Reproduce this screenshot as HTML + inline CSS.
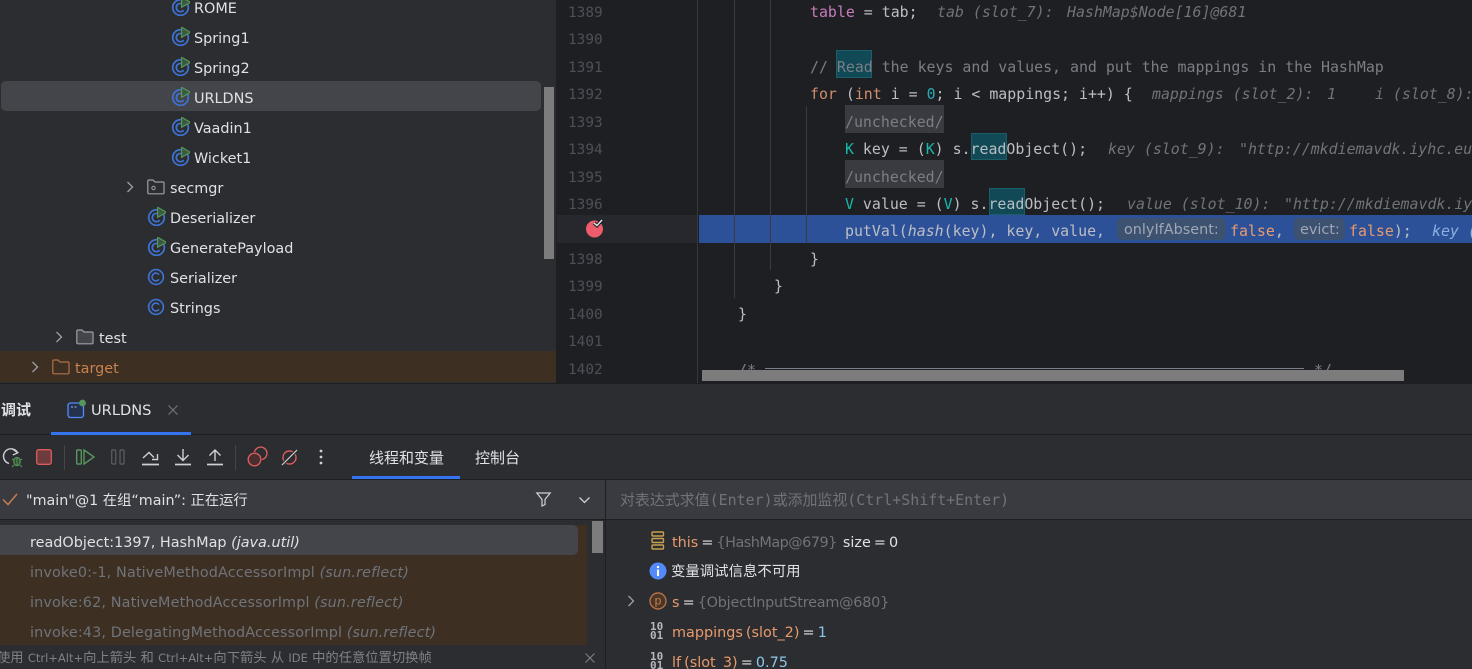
<!DOCTYPE html>
<html><head><meta charset="utf-8">
<style>
html,body{margin:0;padding:0;width:1472px;height:669px;overflow:hidden;background:#2b2d30}
*{box-sizing:border-box}
.a{position:absolute}
#r{position:relative;width:1472px;height:669px;overflow:hidden;font-family:"DejaVu Sans","Noto Sans CJK SC",sans-serif;color:#dfe1e5;font-size:14.4px}
.t{position:absolute;white-space:pre;line-height:20px;height:20px;margin-top:2px}
.c{position:absolute;white-space:pre;font-family:"DejaVu Sans Mono",monospace;font-size:14.9px;line-height:20px;height:20px;color:#bcbec4;margin-top:1px}
.n{position:absolute;left:568px;width:40px;font-family:"DejaVu Sans Mono",monospace;font-size:14.4px;line-height:20px;color:#4b5059;white-space:pre;margin-top:3px}
i{font-style:italic;color:#6f737a}
.hl{background:#114957;box-shadow:inset 0 0 0 1px #1b5d69}
.o{color:#e89a6c}.g{color:#6f737a}.b{color:#8fc7ea}
.k{color:#16baac}.w{color:#cf8e6d}
.s{font:11.5px "DejaVu Sans",sans-serif}
.v{word-spacing:-1.5px}
.st{color:#6f737a;letter-spacing:.12px}
svg{position:absolute;overflow:visible}
</style></head><body><div id="r">
<svg width="0" height="0" style="position:absolute"><defs>
<symbol id="cl" viewBox="0 0 18 18"><circle cx="9" cy="9" r="7.4" fill="none" stroke="#3f73d6" stroke-width="1.6"/><path d="M12 6.6A3.9 3.9 0 1 0 12 11.4" fill="none" stroke="#3f73d6" stroke-width="1.6"/></symbol>
<symbol id="ru" viewBox="0 0 18 18"><circle cx="9" cy="10" r="7.4" fill="none" stroke="#3f73d6" stroke-width="1.6"/><path d="M12 7.6A3.9 3.9 0 1 0 12 12.4" fill="none" stroke="#3f73d6" stroke-width="1.6"/><path d="M10 .2L18.5 5L10 9.8Z" fill="#3a5a3e" stroke="#57965c" stroke-width="1.1"/></symbol>
<symbol id="ch" viewBox="0 0 8 12"><path d="M1.5 1L6.5 6L1.5 11" fill="none" stroke="#9da0a8" stroke-width="1.3"/></symbol>
</defs></svg>

<!-- project tree -->
<div class="a" style="left:0;top:0;width:556px;height:383px;background:#2b2d30"></div>
<div class="a" style="left:1px;top:81px;width:540px;height:30px;background:#43454a;border-radius:5px"></div>
<div class="a" style="left:0;top:351px;width:556px;height:31px;background:#3d3023"></div>
<div class="a" style="left:544px;top:87px;width:10px;height:172px;background:#7c7c7c"></div>

<svg style="left:171px;top:-3px" width="19" height="19"><use href="#ru"/></svg><div class="t" style="left:194px;top:-3px">ROME</div>
<svg style="left:171px;top:27px" width="19" height="19"><use href="#ru"/></svg><div class="t" style="left:194px;top:27px">Spring1</div>
<svg style="left:171px;top:57px" width="19" height="19"><use href="#ru"/></svg><div class="t" style="left:194px;top:57px">Spring2</div>
<svg style="left:171px;top:87px" width="19" height="19"><use href="#ru"/></svg><div class="t" style="left:194px;top:87px">URLDNS</div>
<svg style="left:171px;top:117px" width="19" height="19"><use href="#ru"/></svg><div class="t" style="left:194px;top:117px">Vaadin1</div>
<svg style="left:171px;top:147px" width="19" height="19"><use href="#ru"/></svg><div class="t" style="left:194px;top:147px">Wicket1</div>

<svg style="left:126px;top:181px" width="8" height="12"><use href="#ch"/></svg>
<svg style="left:147px;top:179px" width="18" height="16" viewBox="0 0 18 16"><path d="M.8 13.5V2.3Q.8 1 2 1H6L8 3H16Q17 3 17 4V13.5Q17 14.8 16 14.8H2Q.8 14.8 .8 13.5Z" fill="none" stroke="#9da0a8" stroke-width="1.2"/><circle cx="6.5" cy="9" r="1.7" fill="none" stroke="#9da0a8"/></svg>
<div class="t" style="left:170px;top:177px">secmgr</div>

<svg style="left:147px;top:207px" width="19" height="19"><use href="#ru"/></svg><div class="t" style="left:170px;top:207px">Deserializer</div>
<svg style="left:147px;top:237px" width="19" height="19"><use href="#ru"/></svg><div class="t" style="left:170px;top:237px">GeneratePayload</div>
<svg style="left:147px;top:268px" width="18" height="18"><use href="#cl"/></svg><div class="t" style="left:170px;top:267px">Serializer</div>
<svg style="left:147px;top:298px" width="18" height="18"><use href="#cl"/></svg><div class="t" style="left:170px;top:297px">Strings</div>

<svg style="left:55px;top:331px" width="8" height="12"><use href="#ch"/></svg>
<svg style="left:76px;top:329px" width="18" height="16" viewBox="0 0 18 16"><path d="M.8 13.5V2.3Q.8 1 2 1H6L8 3H16Q17 3 17 4V13.5Q17 14.8 16 14.8H2Q.8 14.8 .8 13.5Z" fill="#43454a" stroke="#9da0a8" stroke-width="1.2"/></svg>
<div class="t" style="left:99px;top:327px">test</div>

<svg style="left:31px;top:361px" width="8" height="12"><use href="#ch"/></svg>
<svg style="left:52px;top:359px" width="18" height="16" viewBox="0 0 18 16"><path d="M.8 13.5V2.3Q.8 1 2 1H6L8 3H16Q17 3 17 4V13.5Q17 14.8 16 14.8H2Q.8 14.8 .8 13.5Z" fill="none" stroke="#b3704a" stroke-width="1.2"/></svg>
<div class="t" style="left:75px;top:357px;color:#c8824f">target</div>

<!-- editor -->
<div class="a" style="left:556px;top:0;width:916px;height:383px;background:#1e1f22"></div>
<div class="a" style="left:557px;top:215px;width:140px;height:28px;background:#26282e"></div>
<div class="a" style="left:699px;top:215px;width:773px;height:28px;background:#2d5199"></div>
<div class="a" style="left:697px;top:0;width:1px;height:383px;background:#35373c"></div>
<div class="a" style="left:734px;top:0;width:1px;height:298px;background:#393b40"></div>
<div class="a" style="left:770px;top:0;width:1px;height:270px;background:#393b40"></div>
<div class="a" style="left:806px;top:106px;width:1px;height:137px;background:#393b40"></div>

<div class="n" style="top:0px">1389</div>
<div class="n" style="top:27px">1390</div>
<div class="n" style="top:55px">1391</div>
<div class="n" style="top:82px">1392</div>
<div class="n" style="top:110px">1393</div>
<div class="n" style="top:137px">1394</div>
<div class="n" style="top:165px">1395</div>
<div class="n" style="top:192px">1396</div>
<div class="n" style="top:247px">1398</div>
<div class="n" style="top:274px">1399</div>
<div class="n" style="top:302px">1400</div>
<div class="n" style="top:329px">1401</div>
<div class="n" style="top:357px">1402</div>

<svg style="left:585px;top:219px" width="20" height="19" viewBox="0 0 20 19"><circle cx="9.5" cy="10" r="8.5" fill="#ed5c6b"/><path d="M9 4L12 6.5L17 1" fill="none" stroke="#1e1f22" stroke-width="3.6"/><path d="M9 4L12 6.5L17 1" fill="none" stroke="#dfe1e5" stroke-width="1.5"/></svg>

<div class="c" style="left:810px;top:1px"><span style="color:#c77dbb">table</span> = tab;</div>
<div class="c" style="left:937px;top:1px"><i>tab (slot_7):</i></div>
<div class="c" style="left:1067px;top:1px"><i>HashMap$Node[16]@681</i></div>
<div class="a hl" style="left:836px;top:50px;width:36px;height:28px"></div>
<div class="c" style="left:810px;top:56px;color:#7a7e85">// Read the keys and values, and put the mappings in the HashMap</div>
<div class="c" style="left:810px;top:83px"><span class="w">for</span> (<span class="w">int</span> i = <span style="color:#2aacb8">0</span>; i &lt; mappings; i++) {</div>
<div class="c" style="left:1152px;top:83px"><i>mappings (slot_2):</i></div>
<div class="c" style="left:1327px;top:83px"><i>1</i></div>
<div class="c" style="left:1375px;top:83px"><i>i (slot_8):</i></div>
<div class="a" style="left:845px;top:105px;width:99px;height:28px;background:#393b40"></div>
<div class="c" style="left:845px;top:111px;color:#7a7e85">/unchecked/</div>
<div class="a hl" style="left:971px;top:133px;width:36px;height:27px"></div>
<div class="c" style="left:845px;top:138px"><span class="k">K</span> key = (<span class="k">K</span>) s.readObject();</div>
<div class="c" style="left:1108px;top:138px"><i>key (slot_9):</i></div>
<div class="c" style="left:1239px;top:138px"><i>"http://mkdiemavdk.iyhc.eu</i></div>
<div class="a" style="left:845px;top:160px;width:99px;height:28px;background:#393b40"></div>
<div class="c" style="left:845px;top:166px;color:#7a7e85">/unchecked/</div>
<div class="a hl" style="left:989px;top:188px;width:36px;height:27px"></div>
<div class="c" style="left:845px;top:193px"><span class="k">V</span> value = (<span class="k">V</span>) s.readObject();</div>
<div class="c" style="left:1127px;top:193px"><i>value (slot_10):</i></div>
<div class="c" style="left:1284px;top:193px"><i>"http://mkdiemavdk.iy</i></div>
<div class="c" style="left:845px;top:220px">putVal(<i style="color:#bcbec4">hash</i>(key), key, value,</div>
<div class="a" style="left:1117px;top:218px;width:109px;height:22px;background:#3d5170;border-radius:5px"></div>
<div class="t" style="left:1124px;top:218px;color:#a0a7b4;font-size:14.4px">onlyIfAbsent:</div>
<div class="c" style="left:1230px;top:220px"><span class="o">false</span>,</div>
<div class="a" style="left:1294px;top:218px;width:51px;height:22px;background:#3d5170;border-radius:5px"></div>
<div class="t" style="left:1300px;top:218px;color:#a0a7b4;font-size:14.4px">evict:</div>
<div class="c" style="left:1349px;top:220px"><span class="o">false</span>);</div>
<div class="c" style="left:1432px;top:220px"><i style="color:#8fb0e0">key (</i></div>
<div class="c" style="left:810px;top:248px">}</div>
<div class="c" style="left:774px;top:275px">}</div>
<div class="c" style="left:738px;top:303px">}</div>
<div class="c" style="left:738px;top:359px;color:#7a7e85">/*</div>
<div class="a" style="left:765px;top:368px;width:539px;height:1px;background:#7a7e85"></div>
<div class="c" style="left:1314px;top:359px;color:#7a7e85">*/</div>
<div class="a" style="left:702px;top:370px;width:702px;height:11px;background:#7c7c7c"></div>

<!-- debug tool window -->
<div class="a" style="left:0;top:383px;width:1472px;height:1px;background:#1e1f22"></div>
<div class="a" style="left:0;top:384px;width:1472px;height:285px;background:#2b2d30"></div>
<div class="t" style="left:1px;top:400px;font-size:15px;font-weight:bold;margin-top:0">调试</div>
<svg style="left:67px;top:399px" width="20" height="20" viewBox="0 0 20 20"><rect x="1" y="4" width="15.5" height="14.5" rx="2.5" fill="#25324d" stroke="#548af7" stroke-width="1.3"/><path d="M4 8h2M7.5 8h2" stroke="#9db8ee" stroke-width="1.1"/><circle cx="15.5" cy="4" r="3.4" fill="#57965c"/></svg>
<div class="t" style="left:91px;top:400px;font-size:14.6px;margin-top:1px">URLDNS</div>
<svg style="left:168px;top:405px" width="10" height="10"><path d="M.5 .5L9.5 9.5M9.5 .5L.5 9.5" stroke="#6f737a" stroke-width="1.2"/></svg>
<div class="a" style="left:0;top:434px;width:1472px;height:1px;background:#1e1f22"></div>
<div class="a" style="left:51px;top:432px;width:140px;height:3px;background:#3574f0"></div>

<!-- toolbar icons -->
<svg style="left:3px;top:448px" width="20" height="20" viewBox="0 0 20 20"><path d="M14.5 4.5A7.5 7.5 0 1 0 6 15.5" fill="none" stroke="#ced0d6" stroke-width="1.4"/><path d="M9.5 1L14.8 4.8L9.8 7" fill="none" stroke="#ced0d6" stroke-width="1.3"/><ellipse cx="14" cy="13.5" rx="3.2" ry="4" fill="#35492f" stroke="#57965c" stroke-width="1.2"/><path d="M9 11l2 1M9 19l2-2M19 11l-2 1M19 19l-2-2M14 9v9" stroke="#57965c"/></svg>
<svg style="left:36px;top:449px" width="16" height="16"><rect x=".7" y=".7" width="14.6" height="14.6" rx="2" fill="#6e3b3e" stroke="#db5c5c" stroke-width="1.3"/></svg>
<div class="a" style="left:64px;top:445px;width:1px;height:25px;background:#43454a"></div>
<svg style="left:76px;top:449px" width="19" height="16" viewBox="0 0 19 16"><rect x=".7" y="1" width="4.6" height="14" rx="1" fill="none" stroke="#57965c" stroke-width="1.4"/><path d="M8 1L18 8L8 15Z" fill="none" stroke="#57965c" stroke-width="1.4"/></svg>
<svg style="left:111px;top:449px" width="14" height="16" viewBox="0 0 14 16"><rect x=".7" y="1" width="4" height="14" rx="1" fill="none" stroke="#55585e" stroke-width="1.4"/><rect x="9" y="1" width="4" height="14" rx="1" fill="none" stroke="#55585e" stroke-width="1.4"/></svg>
<svg style="left:142px;top:450px" width="17" height="16" viewBox="0 0 17 16"><path d="M1 8L7 2.5L12 7.5M15.5 4V9.5H10" fill="none" stroke="#ced0d6" stroke-width="1.4"/><path d="M0 14.5H17" stroke="#ced0d6" stroke-width="1.7"/></svg>
<svg style="left:175px;top:449px" width="16" height="17" viewBox="0 0 16 17"><path d="M8 0V11M2.5 6L8 11.5L13.5 6" fill="none" stroke="#ced0d6" stroke-width="1.4"/><path d="M0 15.5H16" stroke="#ced0d6" stroke-width="1.7"/></svg>
<svg style="left:207px;top:449px" width="16" height="17" viewBox="0 0 16 17"><path d="M8 12V1M2.5 6.5L8 1L13.5 6.5" fill="none" stroke="#ced0d6" stroke-width="1.4"/><path d="M0 15.5H16" stroke="#ced0d6" stroke-width="1.7"/></svg>
<div class="a" style="left:235px;top:445px;width:1px;height:25px;background:#43454a"></div>
<svg style="left:247px;top:448px" width="19" height="19" viewBox="0 0 19 19"><circle cx="7.5" cy="11.5" r="6.3" fill="#4a2f30" stroke="#db5c5c" stroke-width="1.4"/><path d="M7.5 4A6.3 6.3 0 1 1 15 11.5" fill="none" stroke="#db5c5c" stroke-width="1.4"/></svg>
<svg style="left:281px;top:449px" width="17" height="17" viewBox="0 0 17 17"><circle cx="8.5" cy="8.5" r="6.5" fill="none" stroke="#db5c5c" stroke-width="1.4"/><path d="M1 16L16 1" stroke="#2b2d30" stroke-width="3.5"/><path d="M1 16L16 1" stroke="#ced0d6" stroke-width="1.2"/></svg>
<svg style="left:319px;top:449px" width="4" height="16"><circle cx="2" cy="2" r="1.4" fill="#ced0d6"/><circle cx="2" cy="8" r="1.4" fill="#ced0d6"/><circle cx="2" cy="14" r="1.4" fill="#ced0d6"/></svg>

<div class="t" style="left:369px;top:448px;font-size:15px;margin-top:0">线程和变量</div>
<div class="t" style="left:475px;top:448px;font-size:15px;margin-top:0">控制台</div>
<div class="a" style="left:352px;top:476px;width:108px;height:3px;background:#3574f0"></div>
<div class="a" style="left:0;top:479px;width:1472px;height:1px;background:#1e1f22"></div>

<!-- thread header -->
<div class="a" style="left:0;top:480px;width:605px;height:39px;background:#393b40"></div>
<svg style="left:2px;top:493px" width="16" height="13"><path d="M1 6.5L6 11.5L15 1" fill="none" stroke="#c77d55" stroke-width="1.5"/></svg>
<div class="t" style="left:26px;top:490px;font-size:14.3px;margin-top:1px">"main"@1 在组“main”: 正在运行</div>
<svg style="left:536px;top:492px" width="15" height="15" viewBox="0 0 15 15"><path d="M.8 1H14.2L9 7.5V12.5L6 14V7.5Z" fill="none" stroke="#ced0d6" stroke-width="1.2"/></svg>
<svg style="left:579px;top:497px" width="11" height="7"><path d="M.5 .5L5.5 5.5L10.5 .5" fill="none" stroke="#ced0d6" stroke-width="1.3"/></svg>
<div class="a" style="left:0;top:519px;width:1472px;height:1px;background:#1e1f22"></div>

<!-- stack -->
<div class="a" style="left:0;top:525px;width:587px;height:120px;background:#3d3023"></div>
<div class="a" style="left:0;top:525px;width:578px;height:30px;background:#43454a;border-radius:0 5px 5px 0"></div>
<div class="a" style="left:592px;top:521px;width:11px;height:32px;background:#7c7c7c"></div>
<div class="t" style="left:30px;top:531px">readObject:1397, HashMap <i style="color:#dfe1e5">(java.util)</i></div>
<div class="t st" style="left:30px;top:561px">invoke0:-1, NativeMethodAccessorImpl <i>(sun.reflect)</i></div>
<div class="t st" style="left:30px;top:591px">invoke:62, NativeMethodAccessorImpl <i>(sun.reflect)</i></div>
<div class="t st" style="left:30px;top:621px">invoke:43, DelegatingMethodAccessorImpl <i>(sun.reflect)</i></div>
<div class="a" style="left:0;top:645px;width:605px;height:24px;background:#2b2d30"></div>
<div class="t" style="left:-3px;top:649px;font-size:13.3px;color:#7e8188;margin-top:0">使用 <span class="s">Ctrl+Alt+</span>向上箭头 和 <span class="s">Ctrl+Alt+</span>向下箭头 从 <span class="s">IDE</span> 中的任意位置切换帧</div>
<svg style="left:585px;top:653px" width="10" height="10"><path d="M.5 .5L9.5 9.5M9.5 .5L.5 9.5" stroke="#7e8188" stroke-width="1.1"/></svg>

<!-- vars -->
<div class="a" style="left:606px;top:480px;width:866px;height:39px;background:#393b40"></div>
<div class="a" style="left:605px;top:480px;width:1px;height:189px;background:#1e1f22"></div>
<div class="t" style="left:620px;top:488px;font-family:'DejaVu Sans Mono','Noto Sans CJK SC',monospace;font-size:14.95px;color:#6f737a">对表达式求值(Enter)或添加监视(Ctrl+Shift+Enter)</div>

<svg style="left:651px;top:531px" width="14" height="20" viewBox="0 0 14 20"><g fill="none" stroke="#c9a04f" stroke-width="1.4"><rect x="1" y="1" width="11.5" height="4" rx="1"/><rect x="1" y="7.5" width="11.5" height="4" rx="1"/><rect x="1" y="14" width="11.5" height="4" rx="1"/></g></svg>
<div class="t v" style="left:672px;top:531px"><span class="o">this</span> = <span class="g" style="letter-spacing:-.5px">{HashMap@679}</span>  size = 0</div>

<svg style="left:649px;top:562px" width="18" height="18" viewBox="0 0 18 18"><circle cx="9" cy="9" r="8.5" fill="#548af7"/><rect x="8" y="7.5" width="2" height="6.5" fill="#fff"/><rect x="8" y="4" width="2" height="2" fill="#fff"/></svg>
<div class="t" style="left:671px;top:560px;font-size:14.4px">变量调试信息不可用</div>

<svg style="left:627px;top:595px" width="8" height="12"><use href="#ch"/></svg>
<svg style="left:649px;top:592px" width="18" height="18" viewBox="0 0 18 18"><circle cx="9" cy="9" r="8" fill="#4a3527" stroke="#b3704a" stroke-width="1.4"/><text x="9" y="12.5" text-anchor="middle" font-family="Liberation Sans" font-size="12" fill="#c8824f">p</text></svg>
<div class="t v" style="left:672px;top:591px"><span class="o">s</span> = <span class="g" style="letter-spacing:-.22px">{ObjectInputStream@680}</span></div>

<div class="a" style="left:650px;top:622px;width:16px;font:bold 11px/9px 'DejaVu Sans Mono',monospace;color:#b4b8bf">10<br>01</div>
<div class="t v" style="left:672px;top:621px"><span class="o">mappings (slot_2)</span> = <span class="b">1</span></div>
<div class="a" style="left:650px;top:652px;width:16px;font:bold 11px/9px 'DejaVu Sans Mono',monospace;color:#b4b8bf">10<br>01</div>
<div class="t v" style="left:672px;top:651px"><span class="o">lf (slot_3)</span> = <span class="b">0.75</span></div>
</div></body></html>
